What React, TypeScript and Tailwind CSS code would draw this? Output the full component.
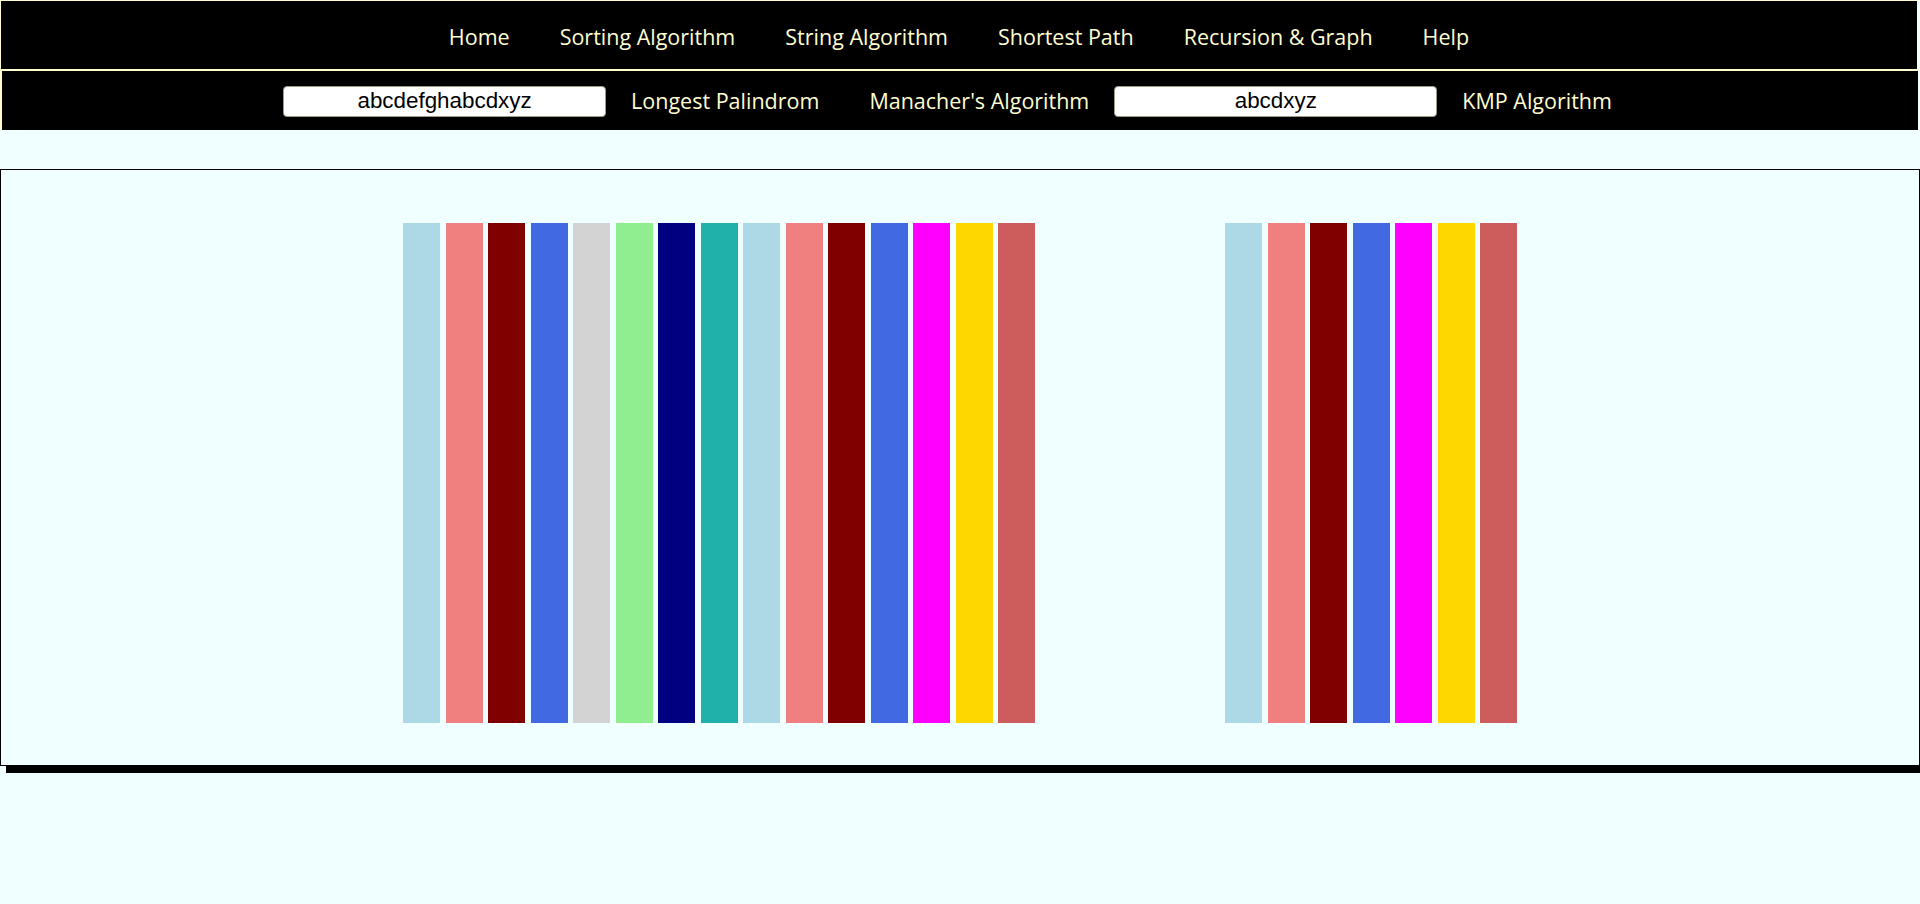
import React from "react";

const group1 = [
  "bg-[#add8e6]",
  "bg-[#f08080]",
  "bg-[#800000]",
  "bg-[#4169e1]",
  "bg-[#d3d3d3]",
  "bg-[#90ee90]",
  "bg-[#000080]",
  "bg-[#20b2aa]",
  "bg-[#add8e6]",
  "bg-[#f08080]",
  "bg-[#800000]",
  "bg-[#4169e1]",
  "bg-[#ff00ff]",
  "bg-[#ffd700]",
  "bg-[#cd5c5c]",
];

const group2 = [
  "bg-[#add8e6]",
  "bg-[#f08080]",
  "bg-[#800000]",
  "bg-[#4169e1]",
  "bg-[#ff00ff]",
  "bg-[#ffd700]",
  "bg-[#cd5c5c]",
];

const linkCls =
  "px-[25px] text-[21.5px] leading-none text-[#fffdd0] whitespace-nowrap cursor-pointer";

function Bars({ colors }: { colors: string[] }) {
  return (
    <div className="flex gap-[5.5px] h-[500px]">
      {colors.map((c, i) => (
        <div key={i} className={`w-[37px] h-full ${c}`} />
      ))}
    </div>
  );
}

export default function App() {
  return (
    <div
      className="min-h-[904px] bg-[#f0ffff] overflow-hidden"
      style={{ fontFamily: '"Open Sans", "Noto Sans", sans-serif' }}
    >
      <nav className="mr-[2px] h-[70px] pt-[4px] border border-[#fffdd0] bg-black flex items-center justify-center">
        <a className={linkCls}>Home</a>
        <a className={linkCls}>Sorting Algorithm</a>
        <a className={linkCls}>String Algorithm</a>
        <a className={linkCls}>Shortest Path</a>
        <a className={linkCls}>Recursion &amp; Graph</a>
        <a className={linkCls}>Help</a>
      </nav>
      <nav className="mr-[2px] h-[60px] pt-[1px] border-t border-l-2 border-[#fffdd0] bg-black flex items-center justify-center">
        <input
          readOnly
          value="abcdefghabcdxyz"
          className="w-[323px] h-[31px] rounded-[4px] border border-[#9c9c84] bg-white text-center text-black text-[22.4px] outline-none"
          style={{ fontFamily: '"Liberation Sans", Arial, sans-serif' }}
        />
        <a className={linkCls}>Longest Palindrom</a>
        <a className={linkCls}>Manacher's Algorithm</a>
        <input
          readOnly
          value="abcdxyz"
          className="w-[323px] h-[31px] rounded-[4px] border border-[#9c9c84] bg-white text-center text-black text-[22.4px] outline-none"
          style={{ fontFamily: '"Liberation Sans", Arial, sans-serif' }}
        />
        <a className={linkCls}>KMP Algorithm</a>
      </nav>
      <div className="mt-[39px] h-[597px] border border-black shadow-[6px_7px_0_#000] flex justify-center items-start gap-[190px] pt-[53px]">
        <Bars colors={group1} />
        <Bars colors={group2} />
      </div>
    </div>
  );
}
